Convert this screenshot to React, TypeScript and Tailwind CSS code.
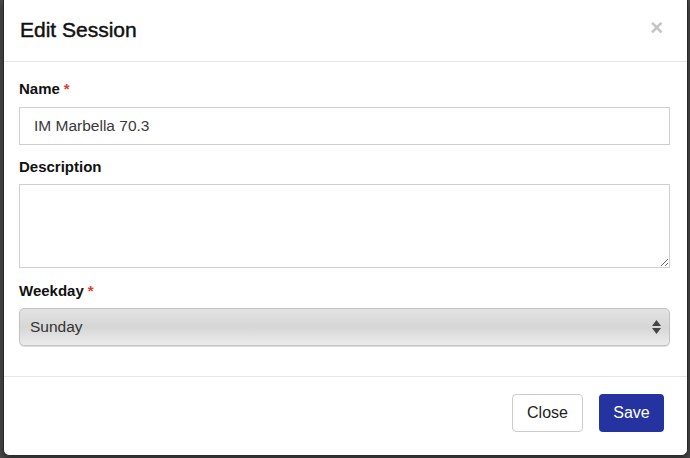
import { useState } from "react";

const font = { fontFamily: '"Liberation Sans", Arial, sans-serif' };

function Label({ text, required }: { text: string; required?: boolean }) {
  return (
    <label className="block h-5 text-[15px] leading-5 font-bold text-[#111]">
      {text}
      {required && <span className="ml-1 text-[#d9412e]">*</span>}
    </label>
  );
}

export default function App() {
  const [name, setName] = useState("IM Marbella 70.3");
  const [desc, setDesc] = useState("");
  const [day, setDay] = useState("Sunday");

  return (
    <div className="w-[690px] h-[458px] overflow-hidden bg-[#4b4b4b]" style={font}>
      <div className="ml-[3px] w-[685px] h-[456px] flex flex-col bg-white rounded-b-[6px] border-x border-b border-[#2a2a2a] shadow-[0_3px_9px_rgba(0,0,0,0.5)]">
        {/* Header */}
        <div className="h-[62px] shrink-0 flex items-center justify-between pl-[16px] pr-[24px] border-b border-[#e5e5e5]">
          <h4 className="text-[21px] leading-none font-medium text-[#111] -mt-[2px] [-webkit-text-stroke:0.45px_#111]">
            Edit Session
          </h4>
          <button className="text-[22px] leading-none font-bold text-[#c4c4c4] -mt-[5px]">×</button>
        </div>

        {/* Body */}
        <div className="flex-1 pt-[17px] pl-[15px] pr-[17px]">
          <Label text="Name" required />
          <input
            value={name}
            onChange={(e) => setName(e.target.value)}
            className="mt-2 block w-full h-[38px] px-[14px] border border-[#cfcfcf] text-[15.5px] text-[#3a3a3a] outline-none"
          />

          <div className="mt-[12px]">
            <Label text="Description" />
          </div>
          <textarea
            value={desc}
            onChange={(e) => setDesc(e.target.value)}
            className="mt-[7px] block w-full h-[84px] px-3 py-2 border border-[#cfcfcf] text-[15px] outline-none"
          />

          <div className="mt-[13px]">
            <Label text="Weekday" required />
          </div>
          <div className="relative mt-[7px]">
            <select
              value={day}
              onChange={(e) => setDay(e.target.value)}
              className="block w-full h-[38px] appearance-none pl-[10px] rounded-[5px] border border-[#c2c2c2] bg-gradient-to-b from-[#e3e3e3] via-[#d6d6d6] to-[#ececec] text-[15.5px] text-[#333] shadow-[0_1px_1px_rgba(0,0,0,0.15)] outline-none"
            >
              {["Monday", "Tuesday", "Wednesday", "Thursday", "Friday", "Saturday", "Sunday"].map((d) => (
                <option key={d}>{d}</option>
              ))}
            </select>
            <svg className="absolute right-[9px] top-[12px] pointer-events-none" width="9" height="14" viewBox="0 0 9 14">
              <path d="M4.5 0 L9 6 L0 6 Z" fill="#444" />
              <path d="M0 8 L9 8 L4.5 14 Z" fill="#444" />
            </svg>
          </div>
        </div>

        {/* Footer */}
        <div className="h-[79px] shrink-0 border-t border-[#e5e5e5] flex items-start justify-end gap-4 pt-[17px] pr-[23px]">
          <button className="w-[71px] h-[38px] rounded-[4px] border border-[#cccccc] bg-white text-[16px] leading-none text-[#222]">
            Close
          </button>
          <button className="w-[65px] h-[38px] rounded-[4px] bg-[#24339f] text-[16px] leading-none text-white">
            Save
          </button>
        </div>
      </div>
    </div>
  );
}
